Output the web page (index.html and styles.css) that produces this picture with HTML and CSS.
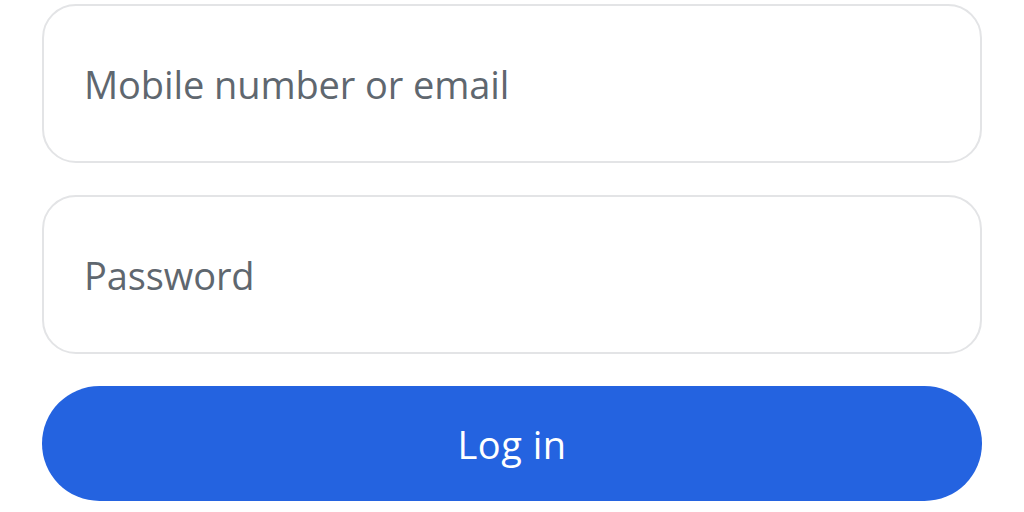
FILE: index.html
```html
<!DOCTYPE html>
<html lang="en">
<head>
    <meta charset="UTF-8">
    <title>Log in</title>
    <link rel="stylesheet" href="styles.css">
</head>
<body>
    <form class="login-form">
        <div class="field">
            <span class="placeholder">Mobile number or email</span>
        </div>
        <div class="field">
            <span class="placeholder">Password</span>
        </div>
        <button type="button" class="login-btn">Log in</button>
    </form>
</body>
</html>
```

FILE: styles.css
```css
* {
    margin: 0;
    padding: 0;
    box-sizing: border-box;
    font-family: 'Open Sans', 'Liberation Sans', sans-serif;
}

body {
    background: #fff;
    width: 1024px;
    height: 512px;
    overflow: hidden;
}

.login-form {
    display: flex;
    flex-direction: column;
    gap: 32px;
    padding: 4px 42px 0 42px;
}

.field {
    height: 159px;
    border: 2px solid #e3e4e6;
    border-radius: 34px;
    display: flex;
    align-items: center;
    padding: 0 40px;
    background: #fff;
}

.placeholder {
    color: #5f676f;
    font-size: 38px;
    letter-spacing: -0.1px;
}

.login-btn {
    height: 115px;
    border: none;
    border-radius: 58px;
    background: #2463e0;
    color: #fff;
    font-size: 38px;
    font-weight: 500;
    letter-spacing: 0.5px;
    cursor: pointer;
}
```
